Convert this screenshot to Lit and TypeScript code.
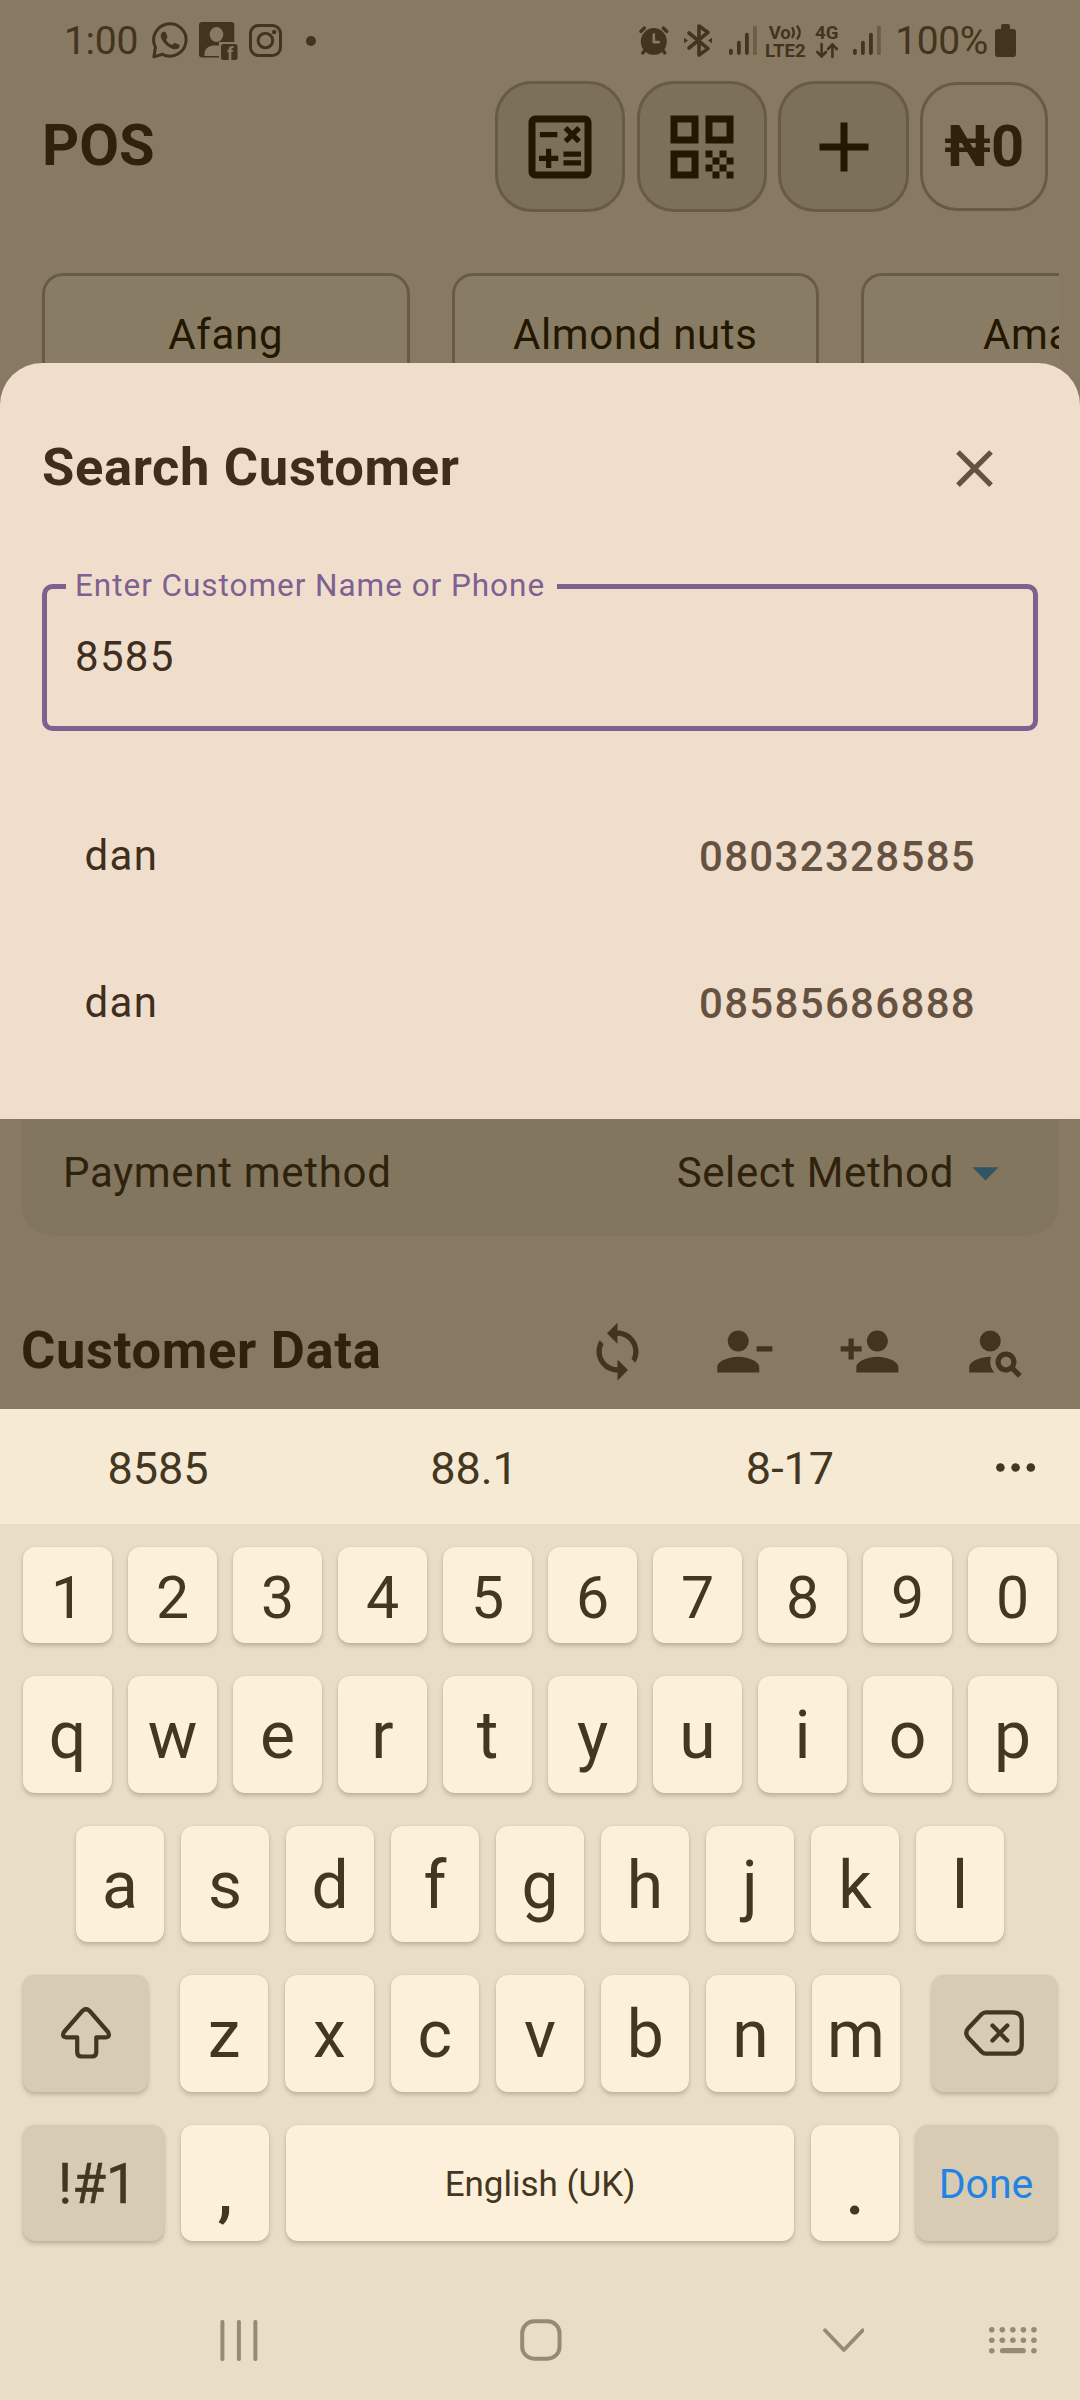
import { LitElement, html, css, svg, nothing } from 'lit';
import { customElement, property } from 'lit/decorators.js';

const MATERIAL: Record<string, string> = {
  calculate:
    'M19 3H5c-1.1 0-2 .9-2 2v14c0 1.1.9 2 2 2h14c1.1 0 2-.9 2-2V5c0-1.1-.9-2-2-2zm0 16H5V5h14v14zM6.25 7.72h5v1.5h-5zM13 15.75h5v1.5h-5zM13 13.25h5v1.5h-5zM8 18h1.5v-2h2v-1.5h-2v-2H8v2H6V16h2zM14.09 10.95l1.41-1.41 1.41 1.41 1.06-1.06-1.41-1.42 1.41-1.41L16.91 6 15.5 7.41 14.09 6l-1.06 1.06 1.41 1.41-1.41 1.42z',
  qr: 'M3 11h8V3H3v8zm2-6h4v4H5V5zM3 21h8v-8H3v8zm2-6h4v4H5v-4zM13 3v8h8V3h-8zm6 6h-4V5h4v4zM19 19h2v2h-2zM13 13h2v2h-2zM15 15h2v2h-2zM13 17h2v2h-2zM15 19h2v2h-2zM17 17h2v2h-2zM17 13h2v2h-2zM19 15h2v2h-2z',
  add: 'M19 13h-6v6h-2v-6H5v-2h6V5h2v6h6v2z',
  close:
    'M19 6.41 17.59 5 12 10.59 6.41 5 5 6.41 10.59 12 5 17.59 6.41 19 12 13.41 17.59 19 19 17.59 13.41 12z',
  dropdown: 'M7 10l5 5 5-5z',
  sync: 'M12 4V1L8 5l4 4V6c3.31 0 6 2.69 6 6 0 1.01-.25 1.97-.7 2.8l1.46 1.46C19.54 15.03 20 13.57 20 12c0-4.42-3.58-8-8-8zm0 14c-3.31 0-6-2.69-6-6 0-1.01.25-1.97.7-2.8L5.24 7.74C4.46 8.97 4 10.43 4 12c0 4.42 3.58 8 8 8v3l4-4-4-4v3z',
  personRemove:
    'M14 8c0-2.21-1.79-4-4-4S6 5.79 6 8s1.79 4 4 4 4-1.79 4-4zm3 2v2h6v-2h-6zM2 18v2h16v-2c0-2.66-5.33-4-8-4s-8 1.34-8 4z',
  personAdd:
    'M15 12c2.21 0 4-1.79 4-4s-1.79-4-4-4-4 1.79-4 4 1.79 4 4 4zm-9-2V7H4v3H1v2h3v3h2v-3h3v-2H6zm9 4c-2.67 0-8 1.34-8 4v2h16v-2c0-2.66-5.33-4-8-4z',
  personSearch:
    'M10 4a4 4 0 1 0 0 8 4 4 0 0 0 0-8zM10.35 14.01C7.62 13.91 2 15.27 2 18v2h9.54c-2.47-2.76-1.23-5.89-1.19-5.99zM19.43 18.02c.36-.59.57-1.28.57-2.02 0-2.21-1.79-4-4-4s-4 1.79-4 4 1.79 4 4 4c.74 0 1.43-.22 2.02-.57L20.59 22 22 20.59l-2.57-2.57zM16 18c-1.1 0-2-.9-2-2s.9-2 2-2 2 .9 2 2-.9 2-2 2z',
};

@customElement('m-icon')
export class MIcon extends LitElement {
  @property() name = '';
  @property({ type: Number }) size = 63;
  static styles = css`
    :host { display: inline-flex; flex: none; }
    svg { display: block; fill: currentColor; }
  `;
  render() {
    return html`<svg width=${this.size} height=${this.size} viewBox="0 0 24 24">
      <path d=${MATERIAL[this.name]}></path>
    </svg>`;
  }
}

@customElement('status-bar')
export class StatusBar extends LitElement {
  static styles = css`
    :host {
      display: flex; align-items: center; justify-content: space-between; box-sizing: border-box;
      height: 81px; padding: 0 64px 0 64px; color: #43341e;
      font: 400 39px/80px Roboto, sans-serif;
    }
    svg { display: block; flex: none; fill: currentColor; overflow: visible; }
    .line { fill: none; stroke: currentColor; stroke-linecap: round; stroke-linejoin: round; }
    .cut { fill: #887963; }
    .cutline { fill: none; stroke: #887963; stroke-linecap: round; stroke-linejoin: round; }
    .faint { opacity: 0.4; }
    .badge { font: 700 18px Roboto, sans-serif; fill: #887963; }
    .left, .right { display: flex; align-items: center; height: 80px; }
    .clock { width: 76px; margin-right: 12px; letter-spacing: -0.3px; }
    .wa { margin-right: 10px; }
    .fb { margin-right: 11px; }
    .ig { margin-right: 24px; }
    .alarm { margin-right: 15px; }
    .bt { margin-right: 17px; }
    .net { display: flex; flex-direction: column; align-items: center; font: 700 18.6px/18px Roboto, sans-serif; padding-top: 2px; }
    .volte { width: 42px; margin: 0 8px 0 7px; }
    .volte .top { display: flex; align-items: center; }
    .g4 { width: 25px; margin-right: 14px; }
    .g4 svg { margin: 1px 0 2px; }
    .pct { margin: 0 7px 0 14px; letter-spacing: -0.4px; }
  `;
  private signal() {
    return html`<svg width="28" height="29" viewBox="0 0 28 29">
      <rect x="0" y="22.7" width="3.8" height="6.3" rx="1.9"></rect>
      <rect x="8" y="14.7" width="3.8" height="14.3" rx="1.9"></rect>
      <rect x="16" y="6.7" width="3.8" height="22.3" rx="1.9"></rect>
      <rect class="faint" x="24" y="0" width="3.8" height="29" rx="1"></rect>
    </svg>`;
  }
  render() {
    return html`
      <div class="left">
        <span class="clock">1:00</span>
        <svg class="wa" width="37" height="37" viewBox="0 0 37 37">
          <path class="line" stroke-width="3" d="M3.4 25.2A16.2 16.2 0 1 1 10.4 32.3L1.9 34.9Z"></path>
          <path d="M9.6 11C10.6 9.5 13.2 9.3 14 11L15.4 14.4C15.8 15.6 13.9 17 14.2 17.9C15.4 20.4 17.2 21.9 19.8 22.8C20.8 23 21.7 20.7 22.9 20.9L26.7 22.6C28.4 23.5 27.6 25.3 26.5 26.2C24.4 27.8 21.9 27.5 19.6 26.4C15 24.4 11.8 21.2 9.6 17C8.5 14.9 8.4 12.7 9.6 11Z"></path>
        </svg>
        <svg class="fb" width="39" height="38" viewBox="0 0 39 38">
          <rect x="0" y="0" width="35.3" height="35.6" rx="3"></rect>
          <ellipse class="cut" cx="17.5" cy="12.5" rx="6.8" ry="7.6"></ellipse>
          <path class="cut" d="M5.5 34V31C6 26 10 24 14 23.4H24V34Z"></path>
          <rect class="cut" x="20" y="20" width="19" height="18"></rect>
          <rect x="22" y="22" width="16.5" height="16" rx="2.5"></rect>
          <text class="badge" x="28" y="38">f</text>
        </svg>
        <svg class="ig" width="33" height="33" viewBox="0 0 33 33">
          <rect class="line" stroke-width="3" x="1.5" y="1.5" width="30" height="30" rx="8"></rect>
          <circle class="line" stroke-width="3" cx="16.4" cy="16.5" r="7.3"></circle>
          <circle cx="25.2" cy="8" r="2.2"></circle>
        </svg>
        <svg width="10" height="10" viewBox="0 0 10 10"><circle cx="5" cy="5" r="5"></circle></svg>
      </div>
      <div class="right">
        <svg class="alarm" width="30" height="29" viewBox="0 0 30 29">
          <ellipse cx="14.8" cy="15.4" rx="13" ry="13.4"></ellipse>
          <path class="line" stroke-width="3.4" d="M1.9 5.4L5.4 2.1M27.8 5.4L24.3 2.1M6 24L3.8 27M23.6 24L25.8 27"></path>
          <path class="cutline" stroke-width="2.6" d="M14.8 8.6V16.1H19.8"></path>
        </svg>
        <svg class="bt" width="28" height="33" viewBox="0 0 28 33">
          <path class="line" stroke-width="3.6" d="M5 9L24 24.6L15 31V2L24 8.4L5 24"></path>
          <path d="M0 13.8L4 16.5L0 19.2ZM28 13.8L24 16.5L28 19.2Z"></path>
        </svg>
        ${this.signal()}
        <div class="net volte">
          <span class="top">Vo<svg width="11" height="15" viewBox="0 0 11 15">
            <path class="line" stroke-width="2.4" d="M1.5 3Q4 7.5 1.5 12M6.5 1.5Q11 7.5 6.5 13.5"></path>
          </svg></span>
          <span>LTE2</span>
        </div>
        <div class="net g4">
          <span>4G</span>
          <svg width="22" height="15" viewBox="0 0 22 15">
            <path class="line" stroke-width="2.6" d="M5.6 1V13M1.3 9L5.6 13.5L10 9M16.4 14V2M12 6L16.4 1.5L20.8 6"></path>
          </svg>
        </div>
        ${this.signal()}
        <span class="pct">100%</span>
        <svg width="21" height="33" viewBox="0 0 21 33">
          <path d="M6 5V2Q6 0 8 0H13Q15 0 15 2V5H18Q21 5 21 8V30Q21 33 18 33H3Q0 33 0 30V8Q0 5 3 5Z"></path>
        </svg>
      </div>
    `;
  }
}

@customElement('pos-screen')
export class PosScreen extends LitElement {
  static styles = css`
    :host {
      display: flex; flex-direction: column; height: 1409px; overflow: hidden;
      background: #887963; color: #2f220d; font: 400 42px/63px Roboto, sans-serif;
    }
    .toolbar { display: flex; align-items: center; height: 131px; padding: 0 32px 0 42px; }
    h1 { flex: 1; margin: 0 0 4px; font: 700 57.75px/70px Roboto, sans-serif; }
    .tools { display: flex; align-items: center; gap: 11.2px; }
    .tool {
      box-sizing: border-box; width: 130.5px; height: 131px; display: flex; align-items: center; justify-content: center;
      border: 3px solid #685b44; border-radius: 37px; background: #7d7059; color: #231700;
    }
    .total {
      width: 128px; height: 129px; padding-bottom: 2px; background: none; color: #2f220d;
      font: 700 57.75px/70px Roboto, sans-serif;
    }
    .products { display: flex; gap: 42px; margin: 61px 21px 0 0; padding-left: 42px; overflow: hidden; flex: none; }
    .product {
      box-sizing: border-box; flex: none; width: 367.5px; height: 150px; padding-top: 27px; text-align: center;
      border: 3px solid #685b44; border-radius: 21px; background: #887c65; color: #231700; letter-spacing: 0.65px;
    }
    .payment {
      margin: auto 21px 0; box-sizing: border-box; height: 190px; padding: 95px 42px 0; display: flex;
      justify-content: space-between; border-radius: 32px; background: #82765e; letter-spacing: 0.7px;
    }
    .method { display: flex; align-items: center; height: 63px; letter-spacing: 0.62px; }
    .method m-icon { color: #315564; }
    .customer { flex: none; height: 173px; box-sizing: border-box; padding: 58px 21px 0; display: flex; justify-content: space-between; }
    h2 { margin: 0; font: 700 52.5px/112px Roboto, sans-serif; letter-spacing: 0.68px; }
    .actions { display: flex; align-items: center; gap: 63px; height: 115px; padding-right: 32px; color: #43341e; }
  `;
  render() {
    return html`
      <status-bar></status-bar>
      <div class="toolbar">
        <h1>POS</h1>
        <div class="tools">
          ${['calculate', 'qr', 'add'].map(
            (n) => html`<div class="tool"><m-icon name=${n} size="84"></m-icon></div>`,
          )}
          <div class="tool total">₦0</div>
        </div>
      </div>
      <div class="products">
        ${['Afang', 'Almond nuts', 'Amala'].map((p) => html`<div class="product">${p}</div>`)}
      </div>
      <div class="payment">
        <span>Payment method</span>
        <span class="method">Select Method<m-icon name="dropdown"></m-icon></span>
      </div>
      <div class="customer">
        <h2>Customer Data</h2>
        <div class="actions">
          ${['sync', 'personRemove', 'personAdd', 'personSearch'].map((n) => html`<m-icon name=${n}></m-icon>`)}
        </div>
      </div>
    `;
  }
}

@customElement('search-sheet')
export class SearchSheet extends LitElement {
  @property({ attribute: false }) results: Array<[string, string]> = [
    ['dan', '08032328585'],
    ['dan', '08585686888'],
  ];
  static styles = css`
    :host {
      display: block; box-sizing: border-box; height: 756px; padding: 0 42px;
      border-radius: 42px 42px 0 0; background: #f0decd; color: #3f2e1e;
      font: 400 42px/60px Roboto, sans-serif; letter-spacing: 1.31px;
    }
    .head { display: flex; align-items: center; justify-content: space-between; padding: 64px 32px 0 0; height: 83px; }
    h2 { margin: 0 0 4px; font: 700 52.5px/80px Roboto, sans-serif; letter-spacing: 0.65px; }
    m-icon { color: #665241; }
    fieldset {
      box-sizing: border-box; height: 165px; margin: 56px 0 0; padding: 0 28px; min-width: 0;
      border: 5.25px solid #805f91; border-radius: 10.5px;
    }
    legend {
      margin-left: -9px; padding: 0 12px 0 9px; color: #805f91;
      font: 400 31.5px/40px Roboto, sans-serif; letter-spacing: 0.96px;
    }
    .value { padding-top: 21px; }
    .results { padding: 51px 62px 0 42.5px; }
    .row { display: flex; align-items: center; justify-content: space-between; height: 147px; }
    .phone { font-weight: 500; color: #665241; padding-top: 2px; }
  `;
  render() {
    return html`
      <div class="head"><h2>Search Customer</h2><m-icon name="close"></m-icon></div>
      <fieldset>
        <legend>Enter Customer Name or Phone</legend>
        <div class="value">8585</div>
      </fieldset>
      <div class="results">
        ${this.results.map(
          ([name, phone]) => html`<div class="row"><span>${name}</span><span class="phone">${phone}</span></div>`,
        )}
      </div>
    `;
  }
}

@customElement('soft-keyboard')
export class SoftKeyboard extends LitElement {
  static styles = css`
    :host { display: block; background: #e9ddc7; color: #443721; font: 400 66px/119px Roboto, sans-serif; }
    .suggest { display: flex; align-items: center; height: 115px; background: #f7ead5; font-size: 45px; line-height: 115px; }
    .suggest span { width: 316px; text-align: center; padding-top: 3px; }
    .suggest svg { margin: 2px 0 0 48px; }
    svg { display: block; fill: currentColor; }
    .keys { display: flex; flex-direction: column; gap: 33px; padding: 23px 23px 0; }
    .row { display: flex; gap: 16px; height: 116.5px; }
    .digits { height: 96px; font-size: 59px; line-height: 101px; }
    .home { padding: 0 53px; gap: 17px; }
    .group { display: flex; flex: 1; gap: 17px; margin: 0 16px; }
    .key {
      flex: 1 1 0; min-width: 0; display: flex; justify-content: center; border-radius: 12px; background: #fdf0db;
      box-shadow: 0 3px 4px rgba(90, 70, 30, 0.26), 0 0 2px rgba(90, 70, 30, 0.12);
    }
    .dark { flex: none; box-sizing: border-box; width: 125px; align-items: center; background: #d8cbb4; }
    .erase { padding-right: 2px; }
    .wide { width: 141px; }
    .sym { font-size: 55px; padding: 3px 0 0 8px; line-height: 113px; -webkit-text-stroke: 0.5px #443721; }
    .punct { flex: none; width: 88px; font-size: 68px; font-weight: 500; line-height: 132px; }
    .space { font-size: 35px; line-height: 119px; }
    .done { font-size: 41px; padding: 4px 1px 0 0; line-height: 113px; color: #2383e2; }
    .bottom { gap: 17px; }
    .line { fill: none; stroke: currentColor; stroke-linecap: round; stroke-linejoin: round; }
    .nav { display: flex; align-items: center; height: 80px; padding: 59px 43px 20px 220px; color: #978a73; }
    .n1 { margin-right: 262px; }
    .n2 { margin-right: 261px; }
    .n3 { margin-right: 125px; }
  `;
  private keys(s: string) {
    return [...s].map((k) => html`<div class="key">${k}</div>`);
  }
  render() {
    const dots = [0, 1, 2].flatMap((r) =>
      [0, 1, 2, 3, 4].map((c) =>
        r === 2 && c > 0 && c < 4
          ? nothing
          : svg`<circle cx=${2.8 + c * 10.6} cy=${2.8 + r * 10.5} r="2.8"></circle>`,
      ),
    );
    return html`
      <div class="suggest">
        <span>8585</span><span>88.1</span><span>8-17</span>
        <svg width="40" height="9" viewBox="0 0 40 9">
          <circle cx="4.4" cy="4.5" r="4.3"></circle><circle cx="19.6" cy="4.5" r="4.3"></circle><circle cx="34.8" cy="4.5" r="4.3"></circle>
        </svg>
      </div>
      <div class="keys">
        <div class="row digits">${this.keys('1234567890')}</div>
        <div class="row">${this.keys('qwertyuiop')}</div>
        <div class="row home">${this.keys('asdfghjkl')}</div>
        <div class="row">
          <div class="key dark">
            <svg width="50" height="52" viewBox="0 0 50 52">
              <path class="line" stroke-width="4.2" d="M21.3 4Q25 .3 28.7 4L47 25Q49.5 30 45 30.3H35.3V45Q35.3 49.5 31 49.5H20.5Q16.2 49.5 16.2 45V30.3H5Q.5 30 3 25Z"></path>
            </svg>
          </div>
          <div class="group">${this.keys('zxcvbnm')}</div>
          <div class="key dark erase">
            <svg width="60" height="46" viewBox="0 0 60 46">
              <path class="line" stroke-width="4.3" d="M22 2.3H48.5Q57.7 2.3 57.7 11V35Q57.7 43.7 48.5 43.7H22Q19.5 43.7 17.5 41.7L4 27.5Q.5 23 4 18.5L17.5 4.3Q19.5 2.3 22 2.3Z"></path>
              <path class="line" stroke-width="4.3" d="M28.5 15.5L43.3 30.5M43.3 15.5L28.5 30.5"></path>
            </svg>
          </div>
        </div>
        <div class="row bottom">
          <div class="key dark wide sym">!#1</div>
          <div class="key punct">,</div>
          <div class="key space">English (UK)</div>
          <div class="key punct">.</div>
          <div class="key dark wide done">Done</div>
        </div>
      </div>
      <div class="nav">
        <svg class="n1" width="38" height="41" viewBox="0 0 38 41">
          <rect x="0.4" width="4" height="41" rx="1.6"></rect><rect x="17" width="4" height="41" rx="1.6"></rect><rect x="33.6" width="4" height="41" rx="1.6"></rect>
        </svg>
        <svg class="n2" width="42" height="42" viewBox="0 0 42 42">
          <rect class="line" stroke-width="4" x="2.2" y="2.2" width="37.6" height="37.6" rx="12"></rect>
        </svg>
        <svg class="n3" width="42" height="25" viewBox="0 0 42 25">
          <path class="line" stroke-width="3.8" d="M2 2.2L21 22L40 2.2"></path>
        </svg>
        <svg width="48" height="27" viewBox="0 0 48 27">
          ${dots}
          <rect x="11" y="21" width="26" height="5.4" rx="2.7"></rect>
        </svg>
      </div>
    `;
  }
}

@customElement('app-root')
export class AppRoot extends LitElement {
  static styles = css`
    :host { display: flex; flex-direction: column; position: relative; width: 1080px; height: 2400px; overflow: hidden; background: #e9ddc7; }
    pos-screen { flex: none; }
    soft-keyboard { flex: 1; }
    search-sheet { position: absolute; top: 363px; left: 0; right: 0; }
  `;
  render() {
    return html`<pos-screen></pos-screen><soft-keyboard></soft-keyboard><search-sheet></search-sheet>`;
  }
}
